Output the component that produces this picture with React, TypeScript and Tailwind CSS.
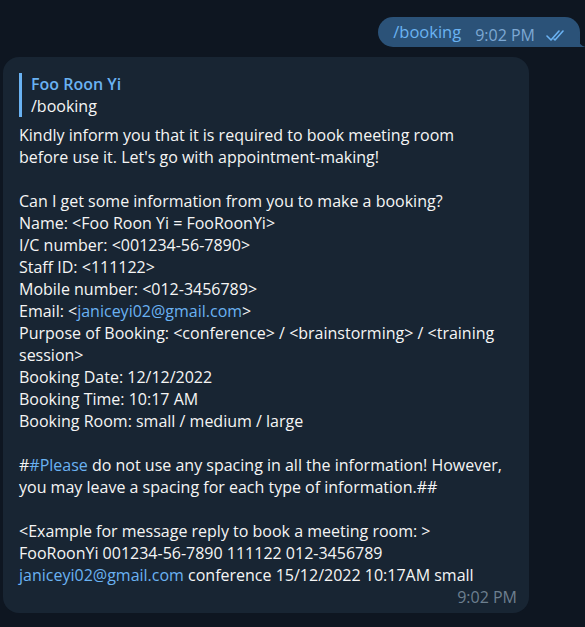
import React from 'react';

const DoubleCheck = () => (
  <svg width="22" height="12" viewBox="0 0 22 12" fill="none" stroke="#6ab2f2" strokeWidth="1.6" strokeLinecap="round" strokeLinejoin="round">
    <path d="M1 7l4 4L13 2" />
    <path d="M8 10l1 1L17 2" />
  </svg>
);

const Link = ({ children }: { children: React.ReactNode }) => (
  <span className="text-[#6ab2f2]">{children}</span>
);

export default function App() {
  return (
    <div
      className="flex h-[627px] w-[585px] flex-col overflow-hidden bg-[#0e1621] text-[16px] leading-[22px] text-[#f5f5f5]"
      style={{ fontFamily: '"Open Sans", "Noto Sans", sans-serif' }}
    >
      {/* outgoing */}
      <div className="mt-[17px] flex justify-end pr-[5px]">
        <div className="relative flex h-[30px] items-center rounded-l-[15px] rounded-tr-[15px] bg-[#2b5278] pl-[15px] pr-[12px]">
          <span className="text-[16.5px] text-[#6ab2f2]">/booking</span>
          <span className="ml-[14px] mt-[6px] text-[16px] leading-[18px] text-[#7da8d3]">9:02 PM</span>
          <span className="ml-[11px] mt-[6px] flex">
            <DoubleCheck />
          </span>
          <svg className="absolute -right-[6px] bottom-0" width="8" height="10" viewBox="0 0 8 10">
            <path d="M0 0C0 6 3 9 8 10H0z" fill="#2b5278" />
          </svg>
        </div>
      </div>

      {/* incoming */}
      <div className="ml-[3px] mt-[10px] w-[526px] rounded-[16px] bg-[#182533] pb-[7px] pl-[16px] pr-[12px] pt-[16px]">
        <div className="flex border-l-[3px] border-[#6ab2f2] pl-[9px]">
          <div>
            <div className="font-semibold text-[#6ab2f2]">Foo Roon Yi</div>
            <div>/booking</div>
          </div>
        </div>
        <div className="mt-[7px] w-[485px]">
          <div>Kindly inform you that it is required to book meeting room before use it. Let's go with appointment-making!</div>
          <div className="h-[22px]" />
          <div>Can I get some information from you to make a booking?</div>
          <div>Name: &lt;Foo Roon Yi = FooRoonYi&gt;</div>
          <div>I/C number: &lt;001234-56-7890&gt;</div>
          <div>Staff ID: &lt;111122&gt;</div>
          <div>Mobile number: &lt;012-3456789&gt;</div>
          <div>
            Email: &lt;<Link>janiceyi02@gmail.com</Link>&gt;
          </div>
          <div>Purpose of Booking: &lt;conference&gt; / &lt;brainstorming&gt; / &lt;training session&gt;</div>
          <div>Booking Date: 12/12/2022</div>
          <div>Booking Time: 10:17 AM</div>
          <div>Booking Room: small / medium / large</div>
          <div className="h-[22px]" />
          <div>
            #<Link>#Please</Link> do not use any spacing in all the information! However, you may leave a spacing for each type of information.##
          </div>
          <div className="h-[22px]" />
          <div>&lt;Example for message reply to book a meeting room: &gt;</div>
          <div>
            FooRoonYi 001234-56-7890 111122 012-3456789 <Link>janiceyi02@gmail.com</Link> conference 15/12/2022 10:17AM small
          </div>
        </div>
        <div className="mt-[2px] flex justify-end">
          <span className="text-[16px] leading-[18px] text-[#6d7f8f]">9:02 PM</span>
        </div>
      </div>
    </div>
  );
}
